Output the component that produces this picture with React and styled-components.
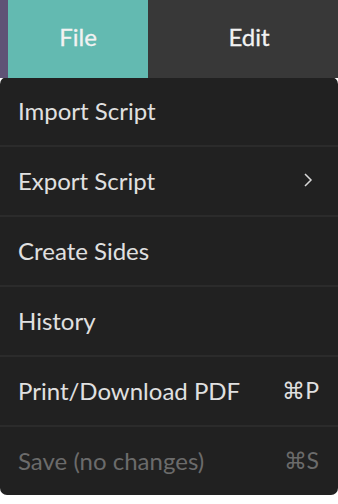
import React from "react";
import styled, { createGlobalStyle } from "styled-components";

const GlobalStyle = createGlobalStyle`
  html, body {
    margin: 0;
    padding: 0;
    background: #ffffff;
  }
  body {
    font-family: Lato, "Noto Sans", sans-serif;
  }
`;

const items = [
  { label: "Import Script" },
  { label: "Export Script", submenu: true },
  { label: "Create Sides" },
  { label: "History" },
  { label: "Print/Download PDF", shortcut: "⌘P" },
  { label: "Save (no changes)", shortcut: "⌘S", disabled: true },
];

const App = () => {
  return (
    <Page>
      <GlobalStyle />
      <TopBar>
        <Strip />
        <Tab $active>File</Tab>
        <Tab>Edit</Tab>
      </TopBar>
      <Menu>
        {items.map((item) => (
          <Item key={item.label} $disabled={item.disabled}>
            <span>{item.label}</span>
            {item.shortcut && <Shortcut>{item.shortcut}</Shortcut>}
            {item.submenu && (
              <Chevron width="10" height="16" viewBox="0 0 10 16">
                <path
                  d="M2 2 L8 8 L2 14"
                  fill="none"
                  stroke="#d8d8d8"
                  strokeWidth="1.5"
                />
              </Chevron>
            )}
          </Item>
        ))}
      </Menu>
    </Page>
  );
};

export default App;

const Page = styled.div`
  width: 338px;
  height: 504px;
  background: #ffffff;
  overflow: hidden;
`;

const TopBar = styled.div`
  display: flex;
  height: 78px;
`;

const Strip = styled.div`
  flex: 0 0 8px;
  background: #5f5276;
`;

const Tab = styled.div`
  flex: 0 0 ${(p) => (p.$active ? "140px" : "202px")};
  background: ${(p) => (p.$active ? "#63bab1" : "#383838")};
  color: #f2f2f2;
  font-size: 24px;
  font-weight: 400;
  -webkit-text-stroke: 0.3px #f2f2f2;
  display: flex;
  align-items: center;
  justify-content: center;
  padding-bottom: 5px;
  box-sizing: border-box;
`;

const Menu = styled.div`
  background: #212121;
  border-radius: 7px;
  margin-top: -1px;
  display: flex;
  flex-direction: column;
`;

const Item = styled.div`
  height: 66px;
  padding: 0 19px 2px 18px;
  display: flex;
  align-items: center;
  justify-content: space-between;
  font-size: 24px;
  color: ${(p) => (p.$disabled ? "#6b6b6b" : "#e0e0e0")};
  border-bottom: 2px solid #2b2b2b;

  &:last-child {
    border-bottom: none;
  }
`;

const Shortcut = styled.span`
  font-size: 23px;
`;

const Chevron = styled.svg`
  margin-right: 6px;
`;
